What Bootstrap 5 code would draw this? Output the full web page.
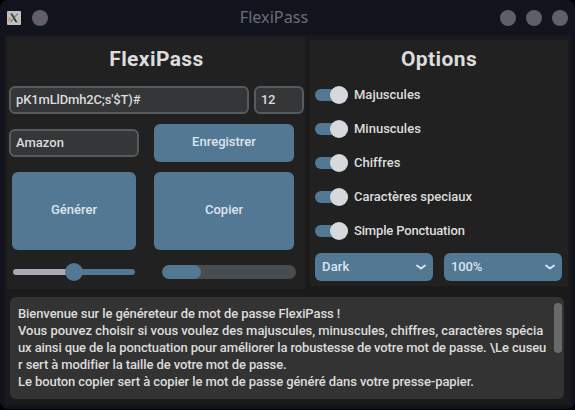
<!DOCTYPE html>
<html lang="fr">
<head>
<meta charset="utf-8">
<meta name="viewport" content="width=device-width, initial-scale=1">
<title>FlexiPass</title>
<link href="https://cdn.jsdelivr.net/npm/bootstrap@5.3.0/dist/css/bootstrap.min.css" rel="stylesheet">
<style>
html{background:#010103}
body{width:575px;height:410px;overflow:hidden;background:#010103;font-family:Roboto,"Liberation Sans",sans-serif;font-size:13px;font-weight:500;line-height:17px;color:#dce4ee}
.window{width:575px;height:409px;background:#11141d;border-radius:8px;padding:0 4px 4px 5px}
.titlebar{height:35px;padding:0 3px 0 2px}
.window-icon{display:block}
.first-dot{margin-left:11px}
.dots-right{gap:10px}
.title-text{font:400 16.2px/20px "Noto Sans",sans-serif;color:#6b6d79;padding-bottom:1px}
.dot{width:16px;height:16px;background:#5f5e69}
.client{height:370px;background:#1a1a1a;padding:2px 3px 0 2px}
.panel{background:#212121}
.generator{width:298px;height:252px;padding:9px 1px 0 2px}
.options{width:258px;height:246px;margin-top:3px;padding:6px 5px 0}
.panel-title{font-size:21px;font-weight:700;line-height:26px;color:#dcdcdc;margin:0 0 14px;text-align:center;letter-spacing:.4px}
.app-input{height:28px;padding:0 5px 1px;border:2px solid #565b5e;border-radius:6px;background:#343638;font:inherit;color:#dcdcdc;min-width:0}
.app-input:focus{background:#343638;color:#dcdcdc;box-shadow:none}
.w-pass{width:240px;letter-spacing:-.15px}
.w-len{width:50px;letter-spacing:-.3px}
.w-site{width:130px}
.fields{gap:5px}
.site-row{gap:15px;margin-top:10px}
.action-row{gap:18px;margin:10px 0 0 3px}
.level-row{gap:27px;margin:13px 0 0 4px}
.app-btn,.app-select{background:#527894;color:#dce4ee;border:0;border-radius:6px;font:inherit;padding:0}
.app-btn:hover{background:#466b86;color:#fff}
.save{width:140px;height:38px;padding-bottom:3px}
.generate{width:124px;height:78px;padding-bottom:3px}
.copy{width:140px;height:78px;padding-bottom:3px}
.slider{width:122px;height:18px}
.slider-done{width:61px;height:6px;background:#aaacb5;border-radius:3px;margin-right:-9px}
.slider-rest{flex:1;height:6px;background:#527894;border-radius:3px;margin-left:-4px}
.knob{width:18px;height:18px;background:#527894;border-radius:50%;z-index:1}
.app-progress{width:134px;height:14px;border-radius:7px;background:#4a4d50}
.app-progress .progress-bar{background:#527894;border-radius:7px}
.toggles{gap:16px}
.toggle{height:18px;gap:6px;color:#dcdcdc}
.toggle-label{padding-bottom:2px}
.toggle-track{width:33px;height:12px;background:#527894;border-radius:6px}
.toggle-knob{width:18px;height:18px;flex:none;background:#d5d9de;border-radius:50%}
.selects{gap:11px;margin-top:13px}
.app-select{width:118px;height:28px;padding:0 7px 1px}
.wide{letter-spacing:.15px}
.info{width:554px;height:102px;margin:8px 0 0 3px;background:#333;border-radius:6px;padding:8px 2px 0 8px;color:#dcdcdc}
.info p{margin:0;white-space:nowrap}
.ls-a{letter-spacing:-.09px}.ls-b{letter-spacing:-.036px}.ls-c{letter-spacing:-.12px}.ls-d{letter-spacing:-.1px}.ls-e{letter-spacing:-.078px}.ls-f{letter-spacing:-.17px}
.scroll-thumb{width:8px;height:50px;flex:none;margin-top:-2px;background:#696969;border-radius:4px}
</style>
</head>
<body>
<main class="window">
  <header class="titlebar d-flex align-items-center justify-content-between">
    <div class="d-flex align-items-center">
      <svg class="window-icon" width="14" height="14" viewBox="0 0 14 14"><rect width="14" height="14" rx="1" fill="#bfc1c1"/><path d="M4 8a3 2 0 0 0-2.2 2.2M1.8 6.5l1.5 3" stroke="#dd8263" stroke-width="1.3" fill="none"/><path d="M9.5 10.5l2.5.8" stroke="#d9b36a" stroke-width="1.6"/><path d="M3.2 2.5h2.2l5.2 8.8H8.4z" fill="#3b3e41"/><path d="M10.7 2.5L7.7 6M6.2 8L3.5 11.3" stroke="#55595c" stroke-width="1"/></svg>
      <span class="dot first-dot rounded-circle"></span>
    </div>
    <span class="title-text">FlexiPass</span>
    <div class="dots-right d-flex"><span class="dot rounded-circle"></span><span class="dot rounded-circle"></span><span class="dot rounded-circle"></span></div>
  </header>
  <div class="client">
    <div class="d-flex justify-content-between">
      <section class="panel generator">
        <h1 class="panel-title">FlexiPass</h1>
        <div class="fields d-flex">
          <input class="form-control app-input w-pass" value="pK1mLlDmh2C;s'$T)#" aria-label="Mot de passe">
          <input class="form-control app-input w-len" value="12" aria-label="Taille">
        </div>
        <div class="site-row d-flex align-items-center">
          <input class="form-control app-input w-site" value="Amazon" aria-label="Site">
          <button class="btn app-btn save">Enregistrer</button>
        </div>
        <div class="action-row d-flex">
          <button class="btn app-btn generate">Générer</button>
          <button class="btn app-btn copy">Copier</button>
        </div>
        <div class="level-row d-flex align-items-center">
          <div class="slider d-flex align-items-center"><span class="slider-done"></span><span class="knob"></span><span class="slider-rest"></span></div>
          <div class="progress app-progress"><div class="progress-bar" style="width:29.1%"></div></div>
        </div>
      </section>
      <section class="panel options">
        <h2 class="panel-title">Options</h2>
        <div class="toggles d-flex flex-column">
          <div class="toggle d-flex align-items-center"><span class="toggle-track d-flex align-items-center justify-content-end"><span class="toggle-knob"></span></span><span class="toggle-label">Majuscules</span></div>
          <div class="toggle d-flex align-items-center"><span class="toggle-track d-flex align-items-center justify-content-end"><span class="toggle-knob"></span></span><span class="toggle-label">Minuscules</span></div>
          <div class="toggle d-flex align-items-center"><span class="toggle-track d-flex align-items-center justify-content-end"><span class="toggle-knob"></span></span><span class="toggle-label">Chiffres</span></div>
          <div class="toggle d-flex align-items-center"><span class="toggle-track d-flex align-items-center justify-content-end"><span class="toggle-knob"></span></span><span class="toggle-label">Caractères speciaux</span></div>
          <div class="toggle d-flex align-items-center"><span class="toggle-track d-flex align-items-center justify-content-end"><span class="toggle-knob"></span></span><span class="toggle-label ls-f">Simple Ponctuation</span></div>
        </div>
        <div class="selects d-flex">
          <button class="btn app-select d-flex align-items-center justify-content-between"><span class="wide">Dark</span><svg width="10" height="6" viewBox="0 0 10 6"><path d="M1 1.5l4 3 4-3" fill="none" stroke="#dce4ee" stroke-width="1.8" stroke-linecap="round" stroke-linejoin="round"/></svg></button>
          <button class="btn app-select d-flex align-items-center justify-content-between"><span class="ls-f">100%</span><svg width="10" height="6" viewBox="0 0 10 6"><path d="M1 1.5l4 3 4-3" fill="none" stroke="#dce4ee" stroke-width="1.8" stroke-linecap="round" stroke-linejoin="round"/></svg></button>
        </div>
      </section>
    </div>
    <section class="info d-flex justify-content-between">
      <div class="flex-fill overflow-hidden">
        <p class="ls-a">Bienvenue sur le généreteur de mot de passe FlexiPass !</p>
        <p class="ls-b">Vous pouvez choisir si vous voulez des majuscules, minuscules, chiffres, caractères spécia</p>
        <p class="ls-c">ux ainsi que de la ponctuation pour améliorer la robustesse de votre mot de passe. \Le cuseu</p>
        <p class="ls-d">r sert à modifier la taille de votre mot de passe.</p>
        <p class="ls-e">Le bouton copier sert à copier le mot de passe généré dans votre presse-papier.</p>
      </div>
      <span class="scroll-thumb"></span>
    </section>
  </div>
</main>
<script src="https://cdn.jsdelivr.net/npm/bootstrap@5.3.0/dist/js/bootstrap.bundle.min.js"></script>
</body>
</html>
